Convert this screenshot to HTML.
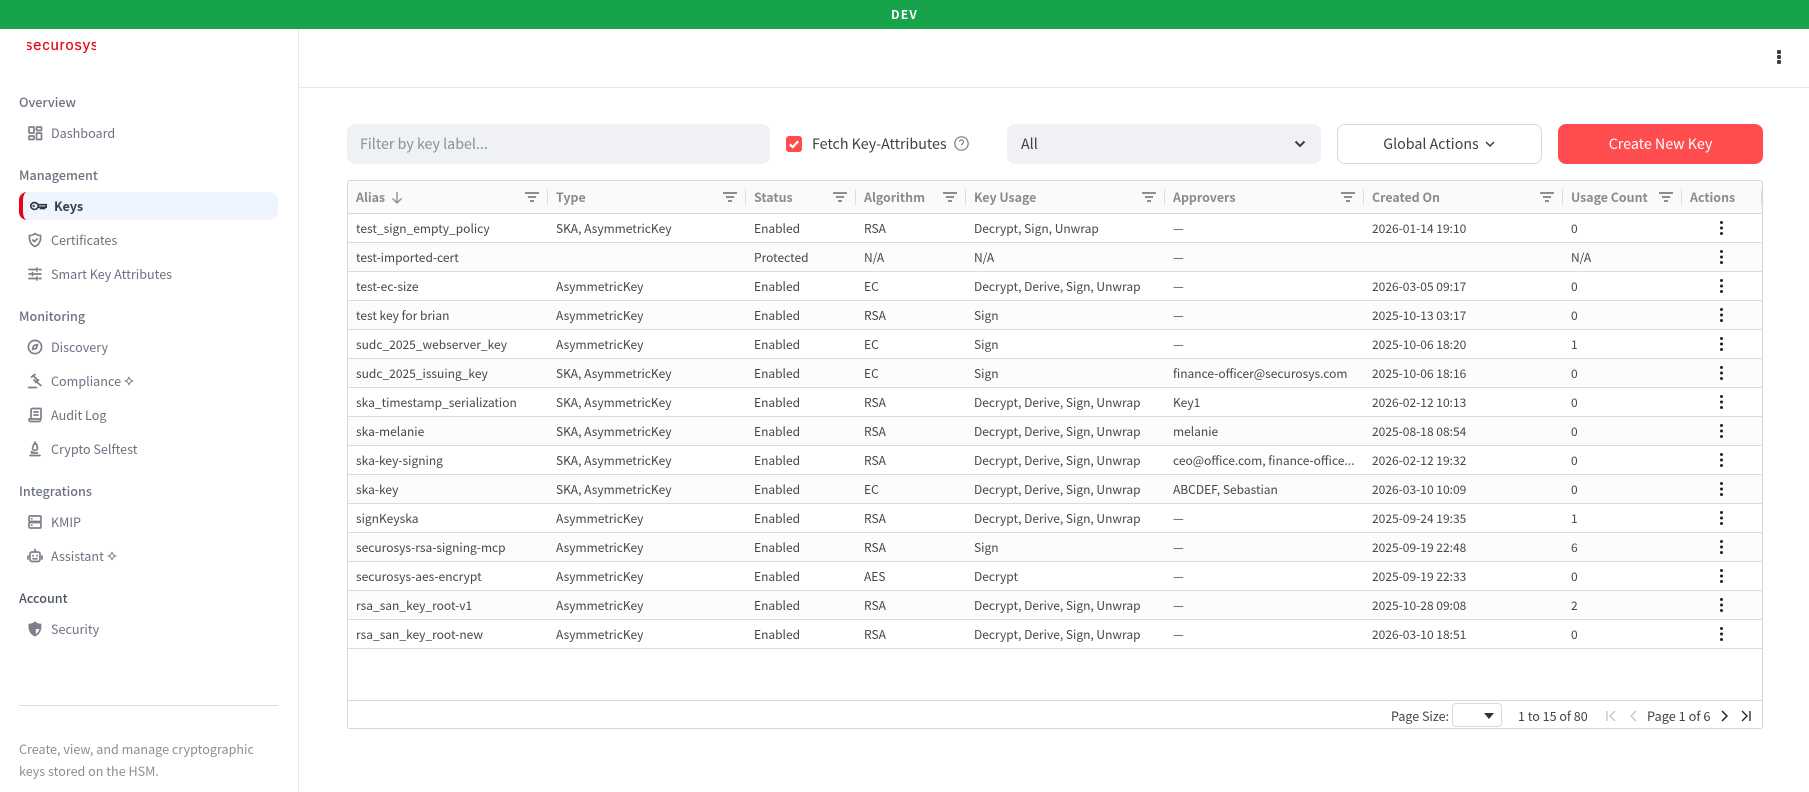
<!DOCTYPE html>
<html lang="en"><head><meta charset="utf-8"><title>Keys</title>
<style>
*{box-sizing:border-box}
html,body{margin:0;padding:0;width:1809px;height:792px;overflow:hidden;background:#fff;font-family:"Noto Sans CJK JP","Liberation Sans",sans-serif;color:#3f3f46}
.a{position:absolute}
.top{left:0;top:0;width:1809px;height:29px;background:#16a34a;color:#fff;font-size:12px;font-weight:700;letter-spacing:1.2px;text-align:center;line-height:29px}
.side{left:0;top:29px;width:299px;height:763px;border-right:1px solid #e5e7eb}
.logo{left:27px;top:30px;width:69px;height:30px;overflow:hidden;color:#e30613;font-family:"Liberation Sans",sans-serif;font-size:14.5px;letter-spacing:1px;line-height:32px;white-space:nowrap}
.logo span{margin-left:-2px;display:block;font-weight:400;-webkit-text-stroke:.2px #e30613}
.sec{left:19px;font-size:12.6px;font-weight:500;color:#6b7280;line-height:20px;white-space:nowrap}
.it{left:51px;font-size:12.6px;color:#6b7280;line-height:20px;white-space:nowrap}
.ic{left:27px;width:16px;height:16px;fill:none;stroke:#7b808a;stroke-width:1.7;stroke-linecap:round;stroke-linejoin:round}
.st{width:10px;height:10px;fill:none;stroke:#7b808a;stroke-width:1}
.pill{left:19px;top:192px;width:259px;height:28px;background:#eef5fe;border-radius:8px;border-left:4px solid #e30613}
.hr{left:19px;top:705px;width:259px;height:1px;background:#dcdcdc}
.desc{left:19px;top:738px;width:270px;font-size:12.6px;line-height:22px;color:#8b8f98}
.hdr{left:299px;top:87px;width:1510px;height:1px;background:#e5e7eb}
.d{width:4px;height:4px;background:#3f3f4a;border-radius:1px;left:1777px}
.inp{top:124px;height:40px;background:#f0f1f5;border-radius:8px;font-size:14.25px;line-height:40px}
.btn{top:124px;height:40px;border-radius:8px;font-size:14.25px;line-height:38px;text-align:center}
.tb{left:347px;top:180px;width:1416px;height:549px;border:1px solid #d6d6d6;border-radius:3px;background:#fff;overflow:hidden}
.h,.r{display:grid;grid-template-columns:200px 198px 110px 110px 199px 199px 199px 119px 80px;width:1414px}
.h{height:33px;background:#fafafa;border-bottom:1px solid #d9d9d9;font-size:12.4px;font-weight:700;color:#8a8a90;line-height:33px}
.h div{padding-left:8px;position:relative;white-space:nowrap}
.h div:not(:last-child):after,.h .ls:after{content:"";position:absolute;right:0;top:8px;height:16px;width:1px;background:#dcdcdc}
.f{position:absolute;top:10px;right:9px;width:14px;height:12px}
.f b,.f s,.f u{position:absolute;height:2px;background:#8d8d93;display:block}
.f b{left:0;width:14px;top:1px}.f s{left:3px;width:8px;top:5px}.f u{left:5px;width:4px;top:9px}
.r{height:29px;border-bottom:1px solid #dcdcdc;font-size:12px;line-height:29.5px;color:#46464c}
.r:nth-child(odd){background:#fcfcfc}
.r div{padding-left:8px;white-space:nowrap;overflow:hidden;position:relative}
.k{position:absolute;left:38px;top:7px;width:3.2px;height:3.2px;background:#222;border-radius:50%;box-shadow:0 5.5px 0 #222,0 11px 0 #222;padding:0!important}
.ft{left:0;top:519px;width:1414px;height:28px;border-top:1px solid #d9d9d9}
.p{font-size:12.5px;line-height:18px;color:#444;white-space:nowrap;top:707px}
.sel{left:1452px;top:703px;width:50px;height:24px;border:1px solid #d9d9d9;border-radius:4px;background:#fff}
.car{left:1484px;top:713px;width:0;height:0;border-left:5px solid transparent;border-right:5px solid transparent;border-top:6px solid #333}
</style></head><body>
<div class="a top">DEV</div>
<div class="a side"></div>
<div class="a logo"><span>securosys</span></div>

<div class="a sec" style="top:92px">Overview</div>
<svg class="a ic" style="top:125px" viewBox="0 0 16 16"><rect x="2" y="2" width="5" height="6" rx=".8"/><rect x="2" y="11" width="5" height="3.5" rx=".8"/><rect x="9.5" y="2" width="5" height="3.5" rx=".8"/><rect x="9.5" y="8" width="5" height="6.5" rx=".8"/></svg>
<div class="a it" style="top:123px">Dashboard</div>

<div class="a sec" style="top:165px">Management</div>
<div class="a pill"></div>
<svg class="a" style="left:30px;top:200px;width:17px;height:12px" viewBox="0 0 17 12" fill="none" stroke="#2f3442" stroke-width="1.6"><ellipse cx="4.500" cy="6" rx="3.700" ry="3.400"/><path d="M8.200 4.700h8v2.500h-1.500v1.200h-1.500V7.200h-1.200v1.200h-1.500V7.200H8.200"/><circle cx="3.700" cy="6" r=".4"/></svg>
<div class="a it" style="top:196px;left:54px;font-weight:700;color:#3a3f4b">Keys</div>
<svg class="a ic" style="top:232px" viewBox="0 0 16 16"><path d="M8 1.500c1.800 1.500 3.700 2 5.500 2 .5 5-1 9-5.500 11-4.500-2-6-6-5.500-11 1.800 0 3.700-.5 5.500-2z"/><path d="M5.800 8l1.600 1.600 2.800-2.800"/></svg>
<div class="a it" style="top:230px">Certificates</div>
<svg class="a ic" style="top:266px" viewBox="0 0 16 16"><path d="M2 3.500h7M12 3.500h2M10 2v3M2 8h2M7 8h7M5.500 6.500v3M2 12.500h7M12 12.500h2M10 11v3"/></svg>
<div class="a it" style="top:264px">Smart Key Attributes</div>

<div class="a sec" style="top:306px">Monitoring</div>
<svg class="a ic" style="top:339px;left:27px" viewBox="0 0 16 16"><circle cx="8" cy="8" r="6.600"/><path d="M10.500 5.500l-1.200 3.800-3.800 1.200 1.200-3.800z"/></svg>
<div class="a it" style="top:337px">Discovery</div>
<svg class="a ic" style="top:373px" viewBox="0 0 16 16"><path d="M1.500 14.500h8M6 2.500l5 5M4.500 4l3.500-2.500M8.500 9.500l3-2.500M7 7l7 5.500"/></svg>
<div class="a it" style="top:371px">Compliance</div>
<svg class="a st" style="left:124px;top:376px" viewBox="0 0 10 10"><path d="M5 .8C5.400 3.400 6.600 4.600 9.200 5 6.600 5.400 5.400 6.600 5 9.200 4.600 6.600 3.400 5.400.8 5 3.400 4.600 4.600 3.400 5 .8z"/></svg>
<svg class="a ic" style="top:407px" viewBox="0 0 16 16"><path d="M4 12V3a1.500 1.500 0 0 1 1.500-1.500H14v10.500M4 12H2v1a1.500 1.500 0 0 0 1.500 1.500H12a1.500 1.500 0 0 0 1.500-1.500v-1H4zM7 5h4M7 8h4"/></svg>
<div class="a it" style="top:405px">Audit Log</div>
<svg class="a ic" style="top:441px" viewBox="0 0 16 16"><path d="M3 14.500h10M4.500 12h6M7.500 12a4 4 0 0 1-3-1.500M7 3l2.500 0 1 4a2.500 2.500 0 0 1-5 0z"/><path d="M8 1v2"/></svg>
<div class="a it" style="top:439px">Crypto Selftest</div>

<div class="a sec" style="top:481px">Integrations</div>
<svg class="a ic" style="top:514px" viewBox="0 0 16 16"><rect x="2" y="2" width="12" height="5.500" rx="1"/><rect x="2" y="8.500" width="12" height="5.500" rx="1"/><path d="M4.500 4.700h.5M4.500 11.200h.5"/></svg>
<div class="a it" style="top:512px">KMIP</div>
<svg class="a ic" style="top:548px" viewBox="0 0 16 16"><rect x="3" y="4" width="10" height="9.500" rx="2"/><path d="M1 8v3M15 8v3M8 1.500V4M6 7.500v.5M10 7.500v.5M6 10.800h4"/></svg>
<div class="a it" style="top:546px">Assistant</div>
<svg class="a st" style="left:107px;top:551px" viewBox="0 0 10 10"><path d="M5 .8C5.400 3.400 6.600 4.600 9.200 5 6.600 5.400 5.400 6.600 5 9.200 4.600 6.600 3.400 5.400.8 5 3.400 4.600 4.600 3.400 5 .8z"/></svg>

<div class="a sec" style="top:588px;color:#4b5563">Account</div>
<svg class="a ic" style="top:621px" viewBox="0 0 16 16"><path d="M8 1.500c1.800 1.500 3.700 2 5.500 2 .5 5-1 9-5.500 11-4.500-2-6-6-5.500-11 1.800 0 3.700-.5 5.500-2z"/><path fill="#7b808a" d="M8 1.500v13c-4.500-2-6-6-5.500-11 1.800 0 3.700-.5 5.500-2z"/><path fill="#7b808a" d="M8 3h5v5H8z" stroke="none"/></svg>
<div class="a it" style="top:619px">Security</div>

<div class="a hr"></div>
<div class="a desc">Create, view, and manage cryptographic<br>keys stored on the HSM.</div>

<div class="a hdr"></div>
<div class="a d" style="top:50px"></div><div class="a d" style="top:55px"></div><div class="a d" style="top:60px"></div>

<div class="a inp" style="left:347px;width:423px;padding-left:13px;color:#8a8f9a">Filter by key label...</div>
<svg class="a" style="left:786px;top:136px" width="16" height="16" viewBox="0 0 16 16"><rect width="16" height="16" rx="3" fill="#ff4d4f"/><path d="M3.800 8.300l2.900 2.800 5.500-5.800" fill="none" stroke="#fff" stroke-width="2.200"/></svg>
<div class="a" style="left:812px;top:134px;font-size:14.25px;line-height:20px;color:#3f3f46;white-space:nowrap">Fetch Key-Attributes</div>
<svg class="a" style="left:954px;top:136px" width="15" height="15" viewBox="0 0 15 15" fill="none" stroke="#7b7b80" stroke-width="1.200"><circle cx="7.500" cy="7.500" r="6.700"/><path d="M5.500 5.800a2 2 0 1 1 3 1.800c-.7.400-1 .8-1 1.600M7.500 11v.5"/></svg>
<div class="a inp" style="left:1007px;width:314px;padding-left:14px;color:#3f3f46">All</div>
<svg class="a" style="left:1294px;top:140px" width="12" height="8" viewBox="0 0 12 8" fill="none" stroke="#3a3a40" stroke-width="2"><path d="M1.500 1.500L6 6l4.500-4.500"/></svg>
<div class="a btn" style="left:1337px;width:205px;border:1px solid #d9d9d9;background:#fff;color:#3f3f46;padding-right:17px">Global Actions</div>
<svg class="a" style="left:1485px;top:141px" width="10" height="7" viewBox="0 0 10 7" fill="none" stroke="#3a3a40" stroke-width="1.500"><path d="M1 1l4 4 4-4"/></svg>
<div class="a btn" style="left:1558px;width:205px;background:#ff4d4f;color:#fff;line-height:40px">Create New Key</div>

<div class="a tb">
<div class="h">
<div>Alias <svg width="12" height="13" viewBox="0 0 12 13" style="margin-left:3px;vertical-align:-2px" fill="none" stroke="#8a8a90" stroke-width="1.300"><path d="M6 1v11M1.500 7.500L6 12l4.500-4.500"/></svg><span class="f"><b></b><s></s><u></u></span></div>
<div>Type<span class="f"><b></b><s></s><u></u></span></div>
<div>Status<span class="f"><b></b><s></s><u></u></span></div>
<div>Algorithm<span class="f"><b></b><s></s><u></u></span></div>
<div>Key Usage<span class="f"><b></b><s></s><u></u></span></div>
<div>Approvers<span class="f"><b></b><s></s><u></u></span></div>
<div>Created On<span class="f"><b></b><s></s><u></u></span></div>
<div>Usage Count<span class="f"><b></b><s></s><u></u></span></div>
<div class="ls">Actions</div>
</div>
<div class="r"><div>test_sign_empty_policy</div><div>SKA, AsymmetricKey</div><div>Enabled</div><div>RSA</div><div>Decrypt, Sign, Unwrap</div><div>—</div><div>2026-01-14 19:10</div><div>0</div><div><span class="k"></span></div></div>
<div class="r"><div>test-imported-cert</div><div></div><div>Protected</div><div>N/A</div><div>N/A</div><div>—</div><div></div><div>N/A</div><div><span class="k"></span></div></div>
<div class="r"><div>test-ec-size</div><div>AsymmetricKey</div><div>Enabled</div><div>EC</div><div>Decrypt, Derive, Sign, Unwrap</div><div>—</div><div>2026-03-05 09:17</div><div>0</div><div><span class="k"></span></div></div>
<div class="r"><div>test key for brian</div><div>AsymmetricKey</div><div>Enabled</div><div>RSA</div><div>Sign</div><div>—</div><div>2025-10-13 03:17</div><div>0</div><div><span class="k"></span></div></div>
<div class="r"><div>sudc_2025_webserver_key</div><div>AsymmetricKey</div><div>Enabled</div><div>EC</div><div>Sign</div><div>—</div><div>2025-10-06 18:20</div><div>1</div><div><span class="k"></span></div></div>
<div class="r"><div>sudc_2025_issuing_key</div><div>SKA, AsymmetricKey</div><div>Enabled</div><div>EC</div><div>Sign</div><div>finance-officer@securosys.com</div><div>2025-10-06 18:16</div><div>0</div><div><span class="k"></span></div></div>
<div class="r"><div>ska_timestamp_serialization</div><div>SKA, AsymmetricKey</div><div>Enabled</div><div>RSA</div><div>Decrypt, Derive, Sign, Unwrap</div><div>Key1</div><div>2026-02-12 10:13</div><div>0</div><div><span class="k"></span></div></div>
<div class="r"><div>ska-melanie</div><div>SKA, AsymmetricKey</div><div>Enabled</div><div>RSA</div><div>Decrypt, Derive, Sign, Unwrap</div><div>melanie</div><div>2025-08-18 08:54</div><div>0</div><div><span class="k"></span></div></div>
<div class="r"><div>ska-key-signing</div><div>SKA, AsymmetricKey</div><div>Enabled</div><div>RSA</div><div>Decrypt, Derive, Sign, Unwrap</div><div>ceo@office.com, finance-office...</div><div>2026-02-12 19:32</div><div>0</div><div><span class="k"></span></div></div>
<div class="r"><div>ska-key</div><div>SKA, AsymmetricKey</div><div>Enabled</div><div>EC</div><div>Decrypt, Derive, Sign, Unwrap</div><div>ABCDEF, Sebastian</div><div>2026-03-10 10:09</div><div>0</div><div><span class="k"></span></div></div>
<div class="r"><div>signKeyska</div><div>AsymmetricKey</div><div>Enabled</div><div>RSA</div><div>Decrypt, Derive, Sign, Unwrap</div><div>—</div><div>2025-09-24 19:35</div><div>1</div><div><span class="k"></span></div></div>
<div class="r"><div>securosys-rsa-signing-mcp</div><div>AsymmetricKey</div><div>Enabled</div><div>RSA</div><div>Sign</div><div>—</div><div>2025-09-19 22:48</div><div>6</div><div><span class="k"></span></div></div>
<div class="r"><div>securosys-aes-encrypt</div><div>AsymmetricKey</div><div>Enabled</div><div>AES</div><div>Decrypt</div><div>—</div><div>2025-09-19 22:33</div><div>0</div><div><span class="k"></span></div></div>
<div class="r"><div>rsa_san_key_root-v1</div><div>AsymmetricKey</div><div>Enabled</div><div>RSA</div><div>Decrypt, Derive, Sign, Unwrap</div><div>—</div><div>2025-10-28 09:08</div><div>2</div><div><span class="k"></span></div></div>
<div class="r"><div>rsa_san_key_root-new</div><div>AsymmetricKey</div><div>Enabled</div><div>RSA</div><div>Decrypt, Derive, Sign, Unwrap</div><div>—</div><div>2026-03-10 18:51</div><div>0</div><div><span class="k"></span></div></div>
<div class="a ft"></div>
</div>

<div class="a p" style="left:1391px">Page Size:</div>
<div class="a sel"></div><div class="a car"></div>
<div class="a p" style="left:1518px">1 to 15 of 80</div>
<svg class="a" style="left:1606px;top:710px" width="10" height="12" viewBox="0 0 10 12" fill="none" stroke="#c4c4c4" stroke-width="1.300"><path d="M1 1v10M9 1L4 6l5 5"/></svg>
<svg class="a" style="left:1630px;top:710px" width="7" height="12" viewBox="0 0 7 12" fill="none" stroke="#c4c4c4" stroke-width="1.300"><path d="M6 1L1 6l5 5"/></svg>
<div class="a p" style="left:1647px;font-size:12.8px">Page 1 of 6</div>
<svg class="a" style="left:1721px;top:710px" width="7" height="12" viewBox="0 0 7 12" fill="none" stroke="#222" stroke-width="1.500"><path d="M1 1l5 5-5 5"/></svg>
<svg class="a" style="left:1741px;top:710px" width="10" height="12" viewBox="0 0 10 12" fill="none" stroke="#222" stroke-width="1.300"><path d="M1 1l5 5-5 5M9 1v10"/></svg>
</body></html>
